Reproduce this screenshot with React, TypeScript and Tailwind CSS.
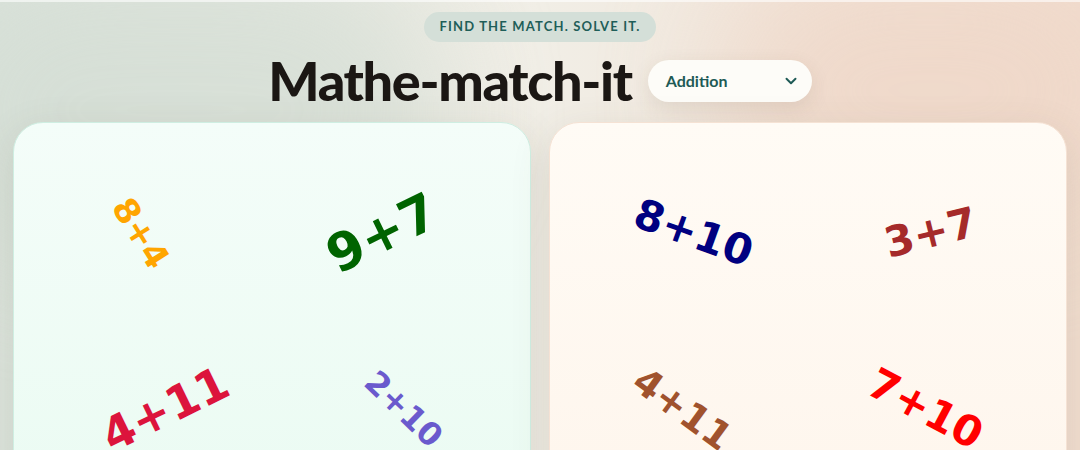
import React from "react";

type Problem = {
  text: string;
  color: string;
  size: string;
  transform: string;
};

const leftCard: Problem[] = [
  { text: "8+4", color: "text-[#ffa500]", size: "text-[34px]", transform: "translate-x-[-2px] rotate-[58deg]" },
  { text: "9+7", color: "text-[#006400]", size: "text-[52px]", transform: "translate-x-[-19px] rotate-[-26deg]" },
  { text: "4+11", color: "text-[#dc143c]", size: "text-[46px]", transform: "translate-x-[22px] rotate-[-26deg]" },
  { text: "2+10", color: "text-[#6a5acd]", size: "text-[32px]", transform: "translate-x-[3px] rotate-[44deg]" },
];

const rightCard: Problem[] = [
  { text: "8+10", color: "text-[#000080]", size: "text-[42px]", transform: "translate-x-[14px] rotate-[20deg]" },
  { text: "3+7", color: "text-[#a52a2a]", size: "text-[42px]", transform: "translate-x-[-6px] rotate-[-14deg]" },
  { text: "4+11", color: "text-[#a0522d]", size: "text-[38px]", transform: "translate-x-[4px] rotate-[36deg]" },
  { text: "7+10", color: "text-[#ff0000]", size: "text-[42px]", transform: "translate-x-[-12px] rotate-[28deg]" },
];

function Card({ items, tone }: { items: Problem[]; tone: "mint" | "peach" }) {
  const shell =
    tone === "mint"
      ? "bg-gradient-to-b from-[#f4fdf9] to-[#eafbf2] border-[#cfeee2]"
      : "bg-gradient-to-b from-[#fffbf5] to-[#fef5ec] border-[#f5e2d4]";
  return (
    <div className={`flex-1 h-[420px] rounded-[30px] border ${shell} shadow-[0_10px_40px_rgba(90,80,60,0.12)] pt-[24px]`}>
      <div className="grid grid-cols-2 gap-y-[4px]">
        {items.map((p, i) => (
          <div key={i} className="h-[172px] flex items-center justify-center">
            <span
              className={`${p.color} ${p.size} ${p.transform} font-bold leading-none whitespace-nowrap select-none`}
              style={{ fontFamily: '"DejaVu Sans", sans-serif' }}
            >
              {p.text}
            </span>
          </div>
        ))}
      </div>
    </div>
  );
}

export default function App() {
  return (
    <div className="relative w-[1080px] h-[450px] overflow-hidden bg-[#efece4]">
      {/* backdrop washes */}
      <div className="absolute inset-0 bg-gradient-to-r from-[#dbe3db] via-[#f1eee6] to-[#f1ddcf]" />
      <div className="absolute left-[-80px] top-[-40px] w-[520px] h-[300px] rounded-full bg-[#d3ddd4] opacity-70 blur-[60px]" />
      <div className="absolute right-[-60px] top-[-40px] w-[420px] h-[260px] rounded-full bg-[#efd7c8] opacity-80 blur-[60px]" />
      <div className="absolute left-0 right-0 top-0 h-[2px] bg-white/60" />

      <div className="relative flex flex-col items-center" style={{ fontFamily: '"Lato", "Noto Sans", sans-serif' }}>
        <div className="mt-[12px] h-[30px] px-[15px] rounded-full bg-[#d4dfd8] flex items-center">
          <span className="text-[13px] font-bold tracking-[0.09em] text-[#1f5e58]">FIND THE MATCH. SOLVE IT.</span>
        </div>

        <div className="mt-[17px] flex items-center gap-[16px]">
          <h1 className="text-[54px] leading-[44px] font-black tracking-[-0.025em] text-[#1b1714]">Mathe-match-it</h1>
          <button className="w-[164px] h-[42px] rounded-full bg-[#fdfcf8] shadow-[0_6px_20px_rgba(80,60,40,0.10)] flex items-center justify-between pl-[18px] pr-[12px] text-[#1e5a55]">
            <span className="text-[16px] font-bold">Addition</span>
            <svg width="18" height="18" viewBox="0 0 24 24" fill="none" stroke="currentColor" strokeWidth="2.6" strokeLinecap="round" strokeLinejoin="round">
              <path d="M6 9l6 6 6-6" />
            </svg>
          </button>
        </div>

        <div className="mt-[19px] w-full px-[13px] flex gap-[18px]">
          <Card items={leftCard} tone="mint" />
          <Card items={rightCard} tone="peach" />
        </div>
      </div>
    </div>
  );
}
